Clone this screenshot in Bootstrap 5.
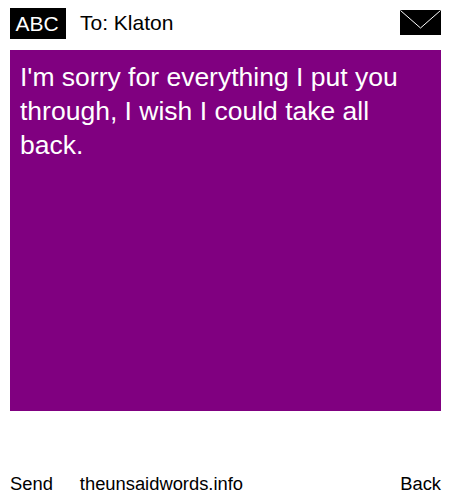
<!DOCTYPE html>
<html><head><meta charset="utf-8">
<link href="https://cdn.jsdelivr.net/npm/bootstrap@5.3.0/dist/css/bootstrap.min.css" rel="stylesheet">
<style>
html,body{height:500px;background:#fff;}
body{font-family:"Liberation Sans",Arial,sans-serif;color:#000;overflow:hidden;}
.shell{width:450px;height:500px;padding:8px 9px 0 10px;}
.topbar{height:31px;font-size:21px;line-height:23px;}
.abc-tag{width:56px;height:31px;background:#000;color:#fff;font-size:21px;padding:0 2px 0 0;}
.to-line{margin-left:14px;margin-bottom:3px;}
.env{width:41px;height:25px;display:block;margin-bottom:2px;}
.msg-box{width:431px;height:361px;margin-top:11px;background:#800080;color:#fff;font-size:26.5px;line-height:34px;padding:10px;}
.foot{margin-top:62px;font-size:18.35px;line-height:21px;}
.foot-site{margin-left:27px;}
</style></head>
<body>
<div class="shell d-flex flex-column">
<div class="topbar d-flex align-items-center">
<div class="abc-tag d-flex align-items-center justify-content-center">ABC</div>
<div class="to-line flex-grow-1">To: Klaton</div>
<svg class="env" viewBox="0 0 41 25"><rect width="41" height="25" fill="#000"/><path d="M0.5 0.5 20.5 18 40.5 0.5" fill="none" stroke="#fff" stroke-width="1"/></svg>
</div>
<div class="msg-box">I'm sorry for everything I put you through, I wish I could take all back.</div>
<div class="foot d-flex"><span>Send</span><span class="foot-site flex-grow-1">theunsaidwords.info</span><span>Back</span></div>
</div>
<script src="https://cdn.jsdelivr.net/npm/bootstrap@5.3.0/dist/js/bootstrap.bundle.min.js"></script>
</body></html>
